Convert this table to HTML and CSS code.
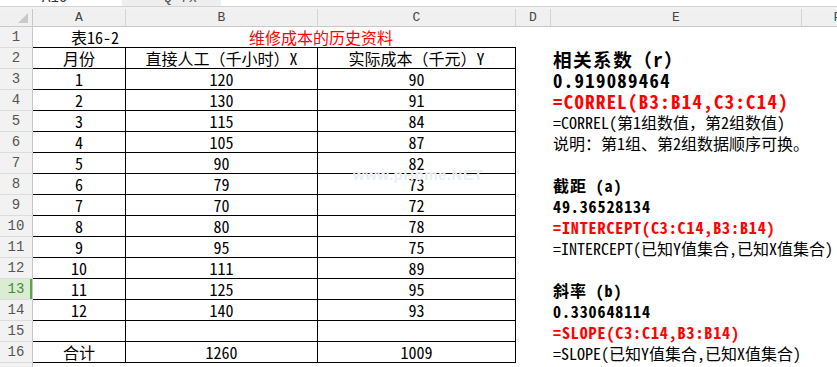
FILE: index.html
```html
<!DOCTYPE html>
<html lang="zh-CN">
<head>
<meta charset="utf-8">
<title>维修成本的历史资料</title>
<link rel="stylesheet" href="styles.css">
</head>
<body>
<div class="fbar">
  <div class="namebox"><span class="cut">A16</span></div>
  <div class="fbtns"><span class="cut fx">Q fx</span></div>
  <div class="finput"></div>
</div>
<div class="gap"></div>
<div class="sheet">
  <div class="corner"><svg class="tri" width="10" height="10" viewBox="0 0 10 10"><polygon points="10,0 10,10 0,10" fill="#c9c9c9"/></svg></div>
  <div class="ch">A</div><div class="ch">B</div><div class="ch">C</div><div class="ch">D</div><div class="ch">E</div><div class="ch">F</div>

  <div class="rh">1</div><div class="c tb right">表16-2</div><div class="c tb span2 red">维修成本的历史资料</div><div class="c"></div><div class="c"></div><div class="c"></div>
  <div class="rh">2</div><div class="c t">月份</div><div class="c t">直接人工（千小时）X</div><div class="c t">实际成本（千元）Y</div><div class="c"></div><div class="c e big">相关系数（r）</div><div class="c"></div>
  <div class="rh">3</div><div class="c t">1</div><div class="c t">120</div><div class="c t">90</div><div class="c"></div><div class="c e big">0.919089464</div><div class="c"></div>
  <div class="rh">4</div><div class="c t">2</div><div class="c t">130</div><div class="c t">91</div><div class="c"></div><div class="c e big red">=CORREL(B3:B14,C3:C14)</div><div class="c"></div>
  <div class="rh">5</div><div class="c t">3</div><div class="c t">115</div><div class="c t">84</div><div class="c"></div><div class="c e">=CORREL(第1组数值，第2组数值)</div><div class="c"></div>
  <div class="rh">6</div><div class="c t">4</div><div class="c t">105</div><div class="c t">87</div><div class="c"></div><div class="c e">说明：第1组、第2组数据顺序可换。</div><div class="c"></div>
  <div class="rh">7</div><div class="c t">5</div><div class="c t">90</div><div class="c t">82</div><div class="c"></div><div class="c e"></div><div class="c"></div>
  <div class="rh">8</div><div class="c t">6</div><div class="c t">79</div><div class="c t">73</div><div class="c"></div><div class="c e mid">截距 (a)</div><div class="c"></div>
  <div class="rh">9</div><div class="c t">7</div><div class="c t">70</div><div class="c t">72</div><div class="c"></div><div class="c e mid">49.36528134</div><div class="c"></div>
  <div class="rh">10</div><div class="c t">8</div><div class="c t">80</div><div class="c t">78</div><div class="c"></div><div class="c e mid red">=INTERCEPT(C3:C14,B3:B14)</div><div class="c"></div>
  <div class="rh">11</div><div class="c t">9</div><div class="c t">95</div><div class="c t">75</div><div class="c"></div><div class="c e">=INTERCEPT(已知Y值集合,已知X值集合)</div><div class="c"></div>
  <div class="rh">12</div><div class="c t">10</div><div class="c t">111</div><div class="c t">89</div><div class="c"></div><div class="c e"></div><div class="c"></div>
  <div class="rh sel">13</div><div class="c t">11</div><div class="c t">125</div><div class="c t">95</div><div class="c"></div><div class="c e mid">斜率 (b)</div><div class="c"></div>
  <div class="rh">14</div><div class="c t">12</div><div class="c t">140</div><div class="c t">93</div><div class="c"></div><div class="c e mid">0.330648114</div><div class="c"></div>
  <div class="rh">15</div><div class="c t"></div><div class="c t"></div><div class="c t"></div><div class="c"></div><div class="c e mid red">=SLOPE(C3:C14,B3:B14)</div><div class="c"></div>
  <div class="rh">16</div><div class="c t">合计</div><div class="c t">1260</div><div class="c t">1009</div><div class="c"></div><div class="c e">=SLOPE(已知Y值集合,已知X值集合)</div><div class="c"></div>
  <div class="rh">17</div><div class="c"></div><div class="c"></div><div class="c"></div><div class="c"></div><div class="c"></div><div class="c"></div>
</div>
<div class="watermark">www.pHome.NET</div>
</body>
</html>
```

FILE: styles.css
```css
* { box-sizing: border-box; }

body {
  margin: 0;
  width: 837px;
  height: 367px;
  overflow: hidden;
  background: #fff;
  position: relative;
}

.fbar {
  display: flex;
  height: 7px;
  border-bottom: 1px solid #d2d2d2;
}

.namebox {
  width: 122px;
  background: #fff;
  overflow: hidden;
  padding-left: 42px;
}

.fbtns {
  width: 99px;
  background: #eeeeee;
  overflow: hidden;
  padding-left: 42px;
}

.finput {
  flex: 1;
  background: #fff;
}

.cut {
  display: block;
  font: 14px/14px "Liberation Mono", monospace;
  color: #333;
  margin-top: -9px;
}

.fx {
  font-style: italic;
  color: #555;
}

.gap {
  height: 2px;
  background: #f2f2f2;
}

.sheet {
  display: grid;
  grid-template-columns: 33px 93px 192px 198px 35px 251px 72px;
  grid-template-rows: 18px repeat(17, 21px);
  font-family: "Noto Sans Mono CJK SC", "Noto Sans CJK SC", monospace;
}

.corner {
  background: #f0f0f0;
  border-right: 1px solid #c8c8c8;
  border-bottom: 1px solid #c8c8c8;
  display: flex;
  justify-content: flex-end;
  align-items: flex-end;
  padding: 0 4px 3px 0;
}

.ch {
  background: #f0f0f0;
  border-right: 1px solid #d4d4d4;
  border-bottom: 1px solid #c8c8c8;
  display: flex;
  align-items: center;
  justify-content: center;
  font: 13px "Liberation Mono", monospace;
  color: #444;
}

.rh {
  background: #f2f2f2;
  border-right: 1px solid #c8c8c8;
  border-bottom: 1px solid #dcdcdc;
  display: flex;
  align-items: center;
  justify-content: center;
  font: 14px "Liberation Mono", monospace;
  color: #555;
}

.rh.sel {
  background: #dbebd4;
  color: #3f8f30;
  box-shadow: inset -2px 0 0 #56a845;
}

.c {
  display: flex;
  align-items: flex-end;
  justify-content: center;
  font-size: 16px;
  line-height: 20px;
  color: #000;
  white-space: nowrap;
}

.t {
  border-right: 1px solid #000;
  border-bottom: 1px solid #000;
}

.tb {
  border-bottom: 1px solid #000;
}

.span2 {
  grid-column: span 2;
}

.right {
  justify-content: flex-end;
  padding-right: 7px;
}

.e {
  justify-content: flex-start;
  padding-left: 2px;
}

.big {
  font-size: 18.67px;
  font-weight: bold;
  letter-spacing: 1.4px;
}

.mid {
  font-size: 16px;
  font-weight: bold;
  letter-spacing: 0.9px;
}

.red {
  color: #ff0000;
}

.watermark {
  position: absolute;
  left: 353px;
  top: 166px;
  font: bold 15px "Liberation Sans", sans-serif;
  color: #e9eef3;
  letter-spacing: 0.5px;
  pointer-events: none;
}
```
